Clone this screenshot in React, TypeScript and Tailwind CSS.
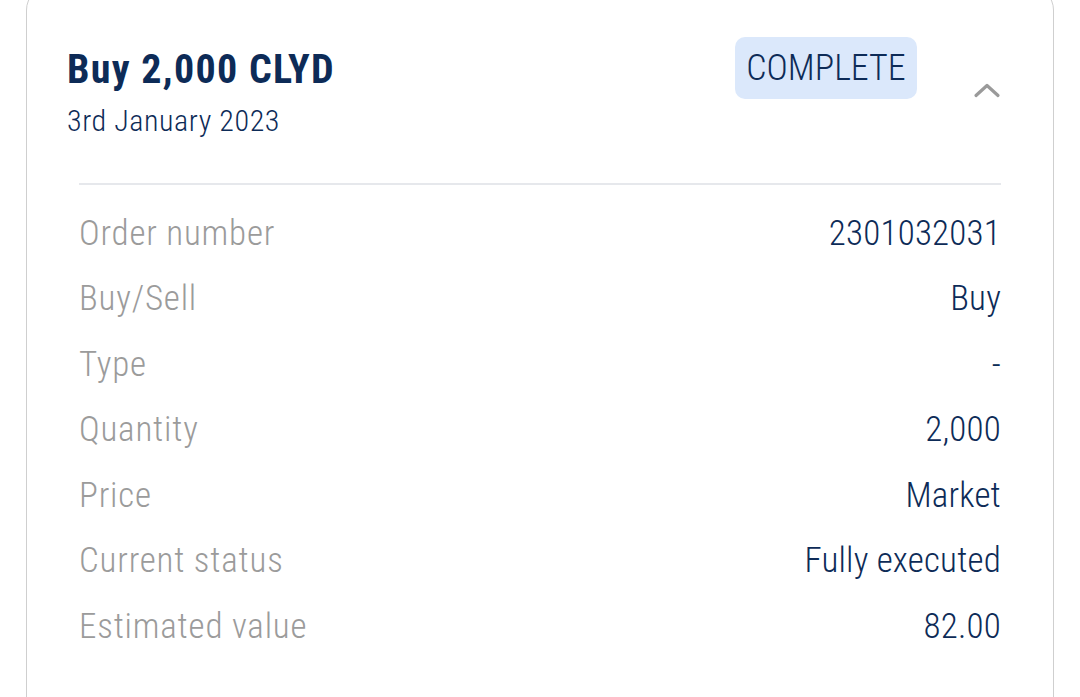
const rows = [
  { label: "Order number", value: "2301032031" },
  { label: "Buy/Sell", value: "Buy" },
  { label: "Type", value: "-" },
  { label: "Quantity", value: "2,000" },
  { label: "Price", value: "Market" },
  { label: "Current status", value: "Fully executed" },
  { label: "Estimated value", value: "82.00" },
];

export default function App() {
  return (
    <div
      className="w-[1080px] h-[697px] overflow-hidden bg-white"
      style={{ fontFamily: "'Roboto Condensed', 'Liberation Sans', sans-serif" }}
    >
      <div className="mx-[26px] -mt-[14px] h-[760px] rounded-[24px] border border-[#cfcfcf] bg-white">
        {/* header */}
        <div className="flex items-start pl-[40px] pr-[52px] pt-[50px]">
          <div className="flex-1 pt-[10px]">
            <h1 className="text-[40px] leading-[46px] font-bold tracking-[1.3px] text-[#0d2b57]">Buy 2,000 CLYD</h1>
            <p className="mt-[11px] text-[30px] leading-[34px] font-light tracking-[0.6px] text-[#0d2b57]">3rd January 2023</p>
          </div>
          <span className="w-[182px] h-[62px] rounded-[10px] bg-[#dbe8fb] flex items-center justify-center text-[36px] font-light text-[#0d2b57]">
            COMPLETE
          </span>
          <svg className="ml-[56px] mt-[45px]" width="28" height="16" viewBox="0 0 28 16" fill="none">
            <path d="M3 13.5L14 3.5L25 13.5" stroke="#9a9a9a" strokeWidth="3.2" strokeLinecap="round" strokeLinejoin="round" />
          </svg>
        </div>

        {/* details */}
        <div className="px-[52px] mt-[45px]">
          <div className="border-t-2 border-[#e6e8ec]" />
          <div className="mt-[16px] flex flex-col">
            {rows.map((r) => (
              <div key={r.label} className="flex h-[65.5px] items-center justify-between text-[35px] font-light">
                <span className="tracking-[0.8px] text-[#9b9b9b]">{r.label}</span>
                <span className="tracking-[0.2px] text-[#0d2b57]">{r.value}</span>
              </div>
            ))}
          </div>
        </div>
      </div>
    </div>
  );
}
